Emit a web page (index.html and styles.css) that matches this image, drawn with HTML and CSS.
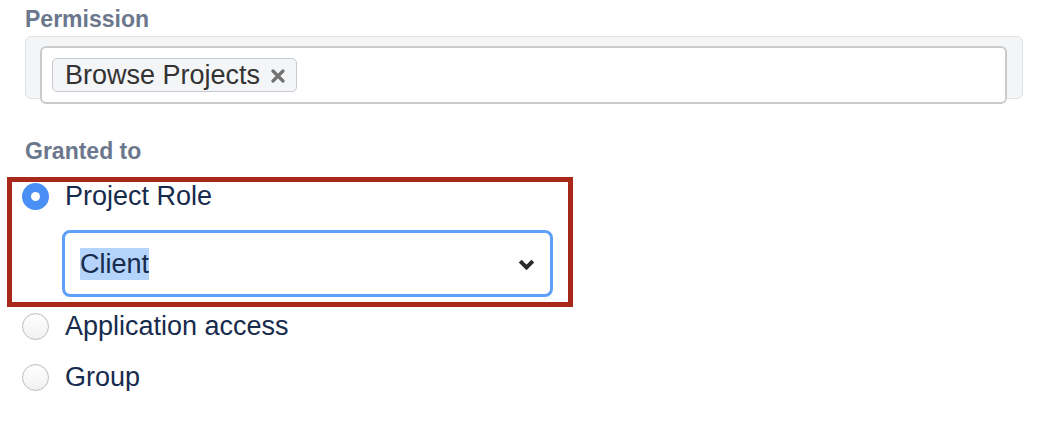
FILE: index.html
```html
<!DOCTYPE html>
<html>
<head>
<meta charset="utf-8">
<link rel="stylesheet" href="styles.css">
</head>
<body>
<div class="form">
  <div class="label">Permission</div>
  <div class="multi">
    <div class="multi-input">
      <span class="tag">
        <span class="tag-text">Browse Projects</span>
        <svg class="tag-x" width="16" height="14" viewBox="0 0 16 14"><path d="M3 2 L13 12 M13 2 L3 12" stroke="#737373" stroke-width="3.2" stroke-linecap="round"/></svg>
      </span>
    </div>
  </div>

  <div class="label label-granted">Granted to</div>
  <div class="highlight">
    <div class="radio-row">
      <span class="radio radio-on"><span class="dot"></span></span>
      <span class="radio-text">Project Role</span>
    </div>
    <div class="select">
      <span class="select-value">Client</span>
      <svg class="chevron" width="17" height="12" viewBox="0 0 17 12"><path d="M2.2 2.2 L8.5 8.5 L14.8 2.2" fill="none" stroke="#2b2b2b" stroke-width="4" stroke-linejoin="miter"/></svg>
    </div>
  </div>
  <div class="radio-row row-app">
    <span class="radio"></span>
    <span class="radio-text">Application access</span>
  </div>
  <div class="radio-row row-group">
    <span class="radio"></span>
    <span class="radio-text">Group</span>
  </div>
</div>
</body>
</html>
```

FILE: styles.css
```css
html, body {
  margin: 0;
  padding: 0;
  background: #ffffff;
}
body {
  font-family: "Liberation Sans", Arial, sans-serif;
  color: #172b4d;
}
.form {
  padding: 5px 0 0 25px;
  width: 998px;
}
.label {
  font-size: 23px;
  font-weight: bold;
  line-height: 28px;
  height: 28px;
  color: #6b778c;
}
.multi {
  margin-top: 3px;
  box-sizing: border-box;
  width: 998px;
  height: 63px;
  background: #f4f5f7;
  border: 1.5px solid #e2e3e7;
  border-radius: 6px;
}
.multi-input {
  box-sizing: border-box;
  margin: 9px 0 0 14px;
  width: 967px;
  height: 58px;
  background: #ffffff;
  border: 2px solid #cbcbcb;
  border-radius: 6px;
  padding: 10px 0 0 10px;
}
.tag {
  box-sizing: border-box;
  display: inline-flex;
  align-items: center;
  height: 34px;
  padding: 0 10px 0 12px;
  background: #f4f5f7;
  border: 1.5px solid #c6c9cf;
  border-radius: 5px;
  color: #333333;
  font-size: 27px;
  line-height: 30px;
}
.tag-x {
  margin-left: 10px;
  margin-top: 1px;
}
.label-granted {
  margin-top: 38px;
}
.highlight {
  margin: 12px 0 0 -18px;
  box-sizing: border-box;
  width: 566px;
  height: 130px;
  border: 5px solid #a8291a;
  padding: 0 0 0 10px;
}
.radio-row {
  display: flex;
  align-items: center;
  height: 28px;
}
.radio {
  box-sizing: border-box;
  width: 27px;
  height: 27px;
  border-radius: 50%;
  border: 1px solid #bdbdbd;
  background: linear-gradient(#ffffff, #f1f1f1);
  box-shadow: inset 0 1px 1px rgba(0,0,0,0.04);
  display: flex;
  align-items: center;
  justify-content: center;
  flex: none;
}
.radio-on {
  border: none;
  background: #4a8ff6;
  box-shadow: none;
}
.dot {
  width: 9px;
  height: 9px;
  border-radius: 50%;
  background: #ffffff;
}
.radio-text {
  margin-left: 16px;
  font-size: 27px;
  line-height: 28px;
  color: #172b4d;
}
.select {
  box-sizing: border-box;
  margin: 20px 0 0 40px;
  width: 491px;
  height: 67px;
  border: 3px solid #5e9ff7;
  border-radius: 8px;
  display: flex;
  align-items: center;
  justify-content: space-between;
  padding: 0 15px 0 15px;
}
.select-value {
  font-size: 27px;
  line-height: 32px;
  background: #b4d4fb;
  color: #172b4d;
}
.chevron {
  margin-top: 2px;
}
.row-app {
  margin: 5px 0 0 -3px;
}
.row-group {
  margin: 23px 0 0 -3px;
}
```
